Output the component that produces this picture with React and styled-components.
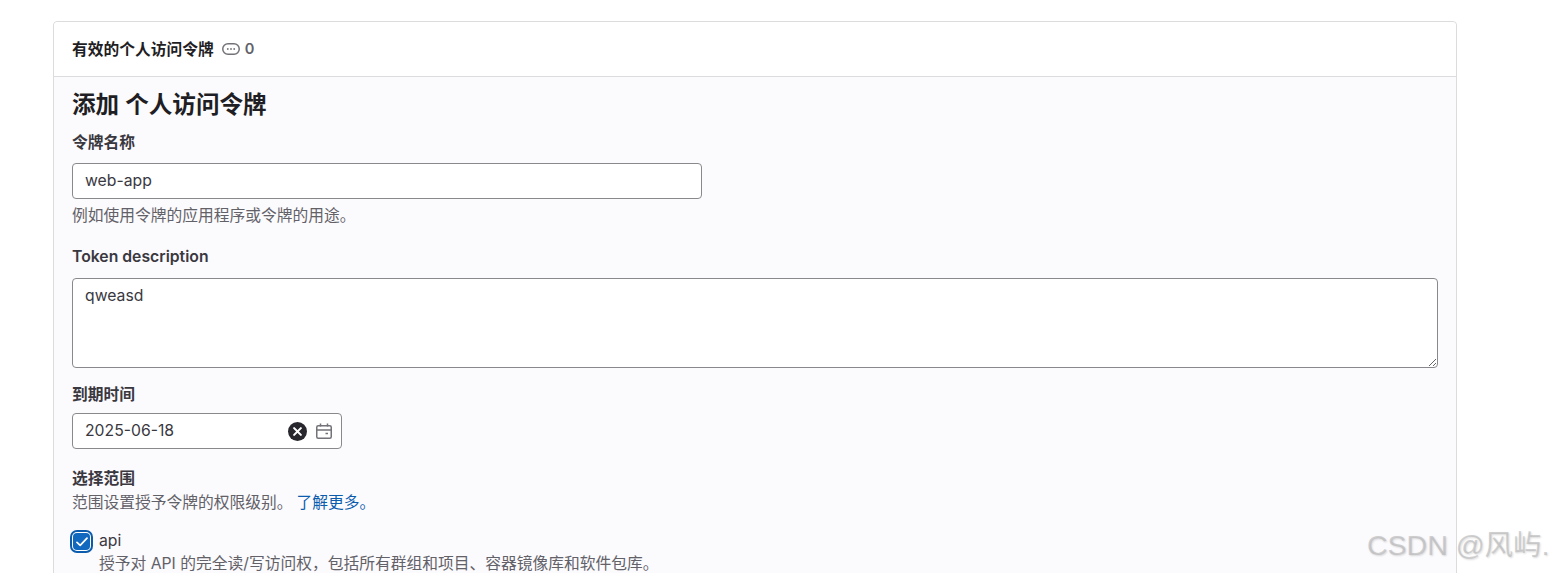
import React from 'react';
import styled, { createGlobalStyle } from 'styled-components';

const GlobalStyle = createGlobalStyle`
  html, body {
    margin: 0;
    height: 573px;
    overflow: hidden;
    background: #fff;
    font-family: Inter, "Noto Sans CJK SC", sans-serif;
    font-size: 15.75px;
    color: #3a383f;
  }
`;

const Page = styled.div`
  box-sizing: border-box;
  height: 573px;
  overflow: hidden;
  padding: 21px 96px 0 53px;
`;

const Card = styled.section`
  border: 1px solid #dcdcde;
  border-radius: 4px;
  background: #fbfafd;
`;

const CardHeader = styled.header`
  display: flex;
  align-items: center;
  height: 52px;
  padding: 0 18px 2px;
  background: #fff;
  border-bottom: 1px solid #dcdcde;
  border-radius: 4px 4px 0 0;
`;

const CardTitle = styled.strong`
  font-size: 15.75px;
  font-weight: 600;
  color: #1f1e24;
`;

const Count = styled.span`
  display: flex;
  align-items: center;
  gap: 5px;
  margin-left: 8px;
  padding-top: 2px;
  font-size: 14.6px;
  font-weight: 600;
  color: #626168;
`;

const CardBody = styled.div`
  padding: 12px 18px 40px;
`;

const Heading = styled.h2`
  margin: 0 0 12px;
  font-size: 23.6px;
  line-height: 31px;
  font-weight: 600;
  color: #1f1e24;
`;

const Field = styled.div`
  margin-bottom: ${p => p.$gap || 0}px;
`;

const Label = styled.label`
  display: block;
  font-size: 15.75px;
  line-height: 22px;
  font-weight: 600;
  color: #3a383f;
  margin-bottom: ${p => p.$gap ?? 9}px;
`;

const TextInput = styled.input`
  display: block;
  box-sizing: border-box;
  width: 630px;
  height: 36px;
  padding: 0 12px 2px;
  border: 1px solid #89888d;
  border-radius: 4px;
  background: #fff;
  font: inherit;
  color: #3a383f;
  outline: none;
`;

const TextArea = styled.textarea`
  display: block;
  box-sizing: border-box;
  width: 100%;
  height: 90px;
  padding: 6px 12px;
  border: 1px solid #89888d;
  border-radius: 4px;
  background: #fff;
  font: inherit;
  line-height: 22px;
  color: #3a383f;
  outline: none;
`;

const Help = styled.p`
  margin: ${p => p.$top ?? 6}px 0 0;
  line-height: 22px;
  color: #626168;
`;

const DateBox = styled.div`
  display: flex;
  align-items: center;
  box-sizing: border-box;
  width: 270px;
  height: 36px;
  padding: 0 9px 0 12px;
  border: 1px solid #89888d;
  border-radius: 4px;
  background: #fff;
`;

const DateValue = styled.input`
  flex: 1;
  min-width: 0;
  border: 0;
  padding: 0 0 2px;
  background: transparent;
  font: inherit;
  color: #3a383f;
  outline: none;
`;

const DateIcons = styled.span`
  display: flex;
  align-items: center;
  gap: 9px;
`;

const MoreLink = styled.a`
  margin-left: 4px;
  color: #0b5cad;
  text-decoration: none;
`;

const ScopeRow = styled.div`
  display: flex;
  gap: 9px;
  margin-top: 16px;
`;

const CheckRing = styled.span`
  flex: none;
  width: 17px;
  height: 17px;
  margin: 3px 0 0 1px;
  display: flex;
  align-items: center;
  justify-content: center;
  border-radius: 4px;
  background: #1068bf;
  box-shadow: 0 0 0 1px #fff, 0 0 0 3px #0b5cad;
`;

const ScopeName = styled.div`
  line-height: 22px;
  color: #3a383f;
`;

const ScopeText = styled.div`
  margin-top: 1px;
  line-height: 22px;
  color: #626168;
`;

const Watermark = styled.div`
  position: absolute;
  left: 1367px;
  top: 527px;
  font-family: "Liberation Sans", "Noto Sans CJK SC", sans-serif;
  font-size: 28.5px;
  line-height: 36px;
  white-space: nowrap;
  color: rgba(170, 170, 170, 0.5);
  text-shadow: 1px 1px 2px rgba(0, 0, 0, 0.15);
`;

const CommentIcon = () => (
  <svg width="18" height="12" viewBox="0 0 18 12" fill="none">
    <rect x="0.75" y="0.75" width="16.5" height="10.5" rx="5.25" stroke="#737278" strokeWidth="1.5" />
    <circle cx="5.8" cy="6" r="0.9" fill="#737278" />
    <circle cx="9" cy="6" r="0.9" fill="#737278" />
    <circle cx="12.2" cy="6" r="0.9" fill="#737278" />
  </svg>
);

const ClearIcon = () => (
  <svg width="19" height="19" viewBox="0 0 18 18">
    <circle cx="9" cy="9" r="9" fill="#28272d" />
    <path d="M5.8 5.8l6.4 6.4M12.2 5.8l-6.4 6.4" stroke="#fff" strokeWidth="2" strokeLinecap="round" />
  </svg>
);

const CalendarIcon = () => (
  <svg width="16" height="16" viewBox="0 0 16 16" fill="none" stroke="#737278" strokeWidth="1.5">
    <rect x="0.75" y="2.75" width="14.5" height="12.5" rx="1.5" />
    <path d="M1 7h14M4.5 0.5v3M11.5 0.5v3M9.5 10.5h2.5" />
  </svg>
);

const CheckIcon = () => (
  <svg width="12" height="10" viewBox="0 0 12 10" fill="none">
    <path d="M1 5.4l3.2 3L11 1.2" stroke="#fff" strokeWidth="1.7" strokeLinecap="round" strokeLinejoin="round" />
  </svg>
);

export default function App() {
  return (
    <Page>
      <GlobalStyle />
      <Card>
        <CardHeader>
          <CardTitle>有效的个人访问令牌</CardTitle>
          <Count>
            <CommentIcon />0
          </Count>
        </CardHeader>
        <CardBody>
          <Heading>添加 个人访问令牌</Heading>
          <Field $gap={19}>
            <Label>令牌名称</Label>
            <TextInput defaultValue="web-app" />
            <Help>例如使用令牌的应用程序或令牌的用途。</Help>
          </Field>
          <Field $gap={16}>
            <Label $gap={10}>Token description</Label>
            <TextArea defaultValue="qweasd" />
          </Field>
          <Field $gap={19}>
            <Label $gap={7}>到期时间</Label>
            <DateBox>
              <DateValue defaultValue="2025-06-18" />
              <DateIcons>
                <ClearIcon />
                <CalendarIcon />
              </DateIcons>
            </DateBox>
          </Field>
          <Label $gap={0}>选择范围</Label>
          <Help $top={2}>
            范围设置授予令牌的权限级别。
            <MoreLink href="#">了解更多。</MoreLink>
          </Help>
          <ScopeRow>
            <CheckRing>
              <CheckIcon />
            </CheckRing>
            <div>
              <ScopeName>api</ScopeName>
              <ScopeText>授予对 API 的完全读/写访问权，包括所有群组和项目、容器镜像库和软件包库。</ScopeText>
            </div>
          </ScopeRow>
        </CardBody>
      </Card>
      <Watermark>CSDN @风屿.</Watermark>
    </Page>
  );
}
